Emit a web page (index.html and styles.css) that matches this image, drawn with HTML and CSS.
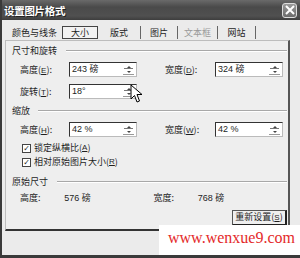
FILE: index.html
```html
<!DOCTYPE html>
<html lang="zh-CN">
<head>
    <meta charset="UTF-8">
    <title>设置图片格式</title>
    <link rel="stylesheet" href="styles.css">
</head>
<body>
    <div class="window">
        <div class="titlebar">
            <span class="title">设置图片格式</span>
            <span class="close">
                <svg width="12" height="12" viewBox="0 0 12 12"><path d="M2 2 L10 10 M10 2 L2 10" stroke="#fff" stroke-width="2"/></svg>
            </span>
        </div>
        <div class="content">
            <div class="tabs">
                <span class="tab tab-first">颜色与线条</span>
                <span class="tab active">大小</span>
                <span class="tab tab-mid">版式</span>
                <span class="tab tab-pic">图片</span>
                <span class="tab tab-text disabled">文本框</span>
                <span class="tab tab-web">网站</span>
            </div>
            <div class="panel">
                <div class="group-title"><span>尺寸和旋转</span></div>
                <div class="row">
                    <label class="lbl">高度(<u>E</u>):</label>
                    <div class="spin"><span class="val">243 磅</span><span class="arrows"><i class="up"></i><i class="down"></i></span></div>
                    <label class="lbl lbl-right">宽度(<u>D</u>):</label>
                    <div class="spin"><span class="val">324 磅</span><span class="arrows"><i class="up"></i><i class="down"></i></span></div>
                </div>
                <div class="row row-gap">
                    <label class="lbl">旋转(<u>T</u>):</label>
                    <div class="spin"><span class="val">18°</span><span class="arrows"><i class="up"></i><i class="down"></i></span></div>
                </div>

                <div class="group-title group-scale"><span>缩放</span></div>
                <div class="row">
                    <label class="lbl">高度(<u>H</u>):</label>
                    <div class="spin"><span class="val">42 %</span><span class="arrows"><i class="up"></i><i class="down"></i></span></div>
                    <label class="lbl lbl-right">宽度(<u>W</u>):</label>
                    <div class="spin"><span class="val">42 %</span><span class="arrows"><i class="up"></i><i class="down"></i></span></div>
                </div>
                <div class="check check-first"><span class="box">✓</span>锁定纵横比(<u>A</u>)</div>
                <div class="check"><span class="box">✓</span>相对原始图片大小(<u>R</u>)</div>

                <div class="group-title group-orig"><span>原始尺寸</span></div>
                <div class="row row-orig">
                    <span class="lbl lbl-short">高度:</span>
                    <span class="num">576 磅</span>
                    <span class="lbl lbl-short">宽度:</span>
                    <span class="num">768 磅</span>
                </div>
                <div class="actions">
                    <button class="reset">重新设置(<u>S</u>)</button>
                </div>
            </div>
        </div>

        <svg class="cursor" width="13" height="20" viewBox="0 0 13 20">
            <path d="M1 1 L1 15 L4.5 11.5 L7 18 L9.5 17 L7 10.5 L12 10.5 Z" fill="#fff" stroke="#000" stroke-width="1"/>
        </svg>

        <div class="watermark">www.wenxue9.com</div>
    </div>
</body>
</html>
```

FILE: styles.css
```css
body {
    margin: 0;
    padding: 0;
    background-color: #fff;
    font-family: "Noto Sans CJK SC", "Noto Sans", sans-serif;
    font-size: 9px;
    color: #1e1e1e;
}

.window {
    position: relative;
    width: 300px;
    height: 258px;
    box-sizing: border-box;
    background-color: #ebebeb;
    border-left: 2px solid #3a3a3a;
    border-bottom: 3px solid #3a3a3a;
    overflow: hidden;
}

.titlebar {
    height: 20px;
    margin-left: -2px;
    display: flex;
    align-items: center;
    justify-content: space-between;
    padding: 0 3px 0 4px;
    background: linear-gradient(#6a6a6a, #4a4a4a 35%, #505050 80%, #3e3e3e);
}

.title {
    color: #fff;
    font-weight: bold;
    font-size: 10.5px;
    letter-spacing: -0.3px;
    text-shadow: 1px 1px 0 #222;
}

.close {
    width: 15px;
    height: 15px;
    box-sizing: border-box;
    border: 1px solid #ddd;
    border-radius: 3px;
    background: linear-gradient(#9a9a9a, #6c6c6c);
    display: flex;
    align-items: center;
    justify-content: center;
}

.content {
    padding: 6px 0 0 3px;
}

.tabs {
    display: flex;
    height: 13px;
    align-items: stretch;
    line-height: 13px;
}

.tab {
    box-sizing: border-box;
    border-right: 1px solid #666;
    text-align: center;
    white-space: nowrap;
}

.tab-first {
    width: 57px;
    padding-left: 7px;
    text-align: left;
    border-right: none;
}

.tab.active {
    width: 36px;
    border: 1px solid #444;
    background-color: #f2f2f2;
    line-height: 11px;
}

.tab-mid { width: 43px; }
.tab-pic { width: 37px; }
.tab-text { width: 40px; }
.tab-web { width: 38px; }

.tab.disabled {
    color: #9a9a9a;
}

.panel {
    margin-top: 1px;
    width: 285px;
    height: 191px;
    box-sizing: border-box;
    border: 1px solid #bdbdbd;
    border-right: 2px solid #555;
    border-bottom: 2px solid #333;
    padding: 4px 1px 0 6px;
    background-color: #eeeeee;
}

.group-title {
    display: flex;
    align-items: center;
    height: 12px;
    line-height: 12px;
}

.group-title::after {
    content: "";
    flex: 1;
    margin-left: 9px;
    border-top: 1px solid #a8a8a8;
    border-bottom: 1px solid #fff;
}

.group-scale {
    margin-top: 6px;
}

.group-orig {
    margin-top: 8px;
}

.group-scale::after {
    margin-left: 8px;
}

.row {
    display: flex;
    align-items: center;
    padding-left: 8px;
    margin-top: 5px;
    height: 15px;
}

.row-gap {
    margin-top: 7px;
}

.lbl {
    width: 49px;
    white-space: nowrap;
}

.lbl-right {
    width: 50px;
    margin-left: 28px;
}

u {
    text-decoration: underline;
    font-family: "Liberation Sans", sans-serif;
    font-size: 8px;
}

.spin {
    width: 68px;
    height: 15px;
    box-sizing: border-box;
    border: 1px solid #333;
    border-right-color: #bbb;
    border-bottom-color: #bbb;
    background-color: #fff;
    display: flex;
    align-items: center;
    justify-content: space-between;
    padding-left: 2px;
}

.val {
    font-family: "Liberation Sans", "Noto Sans CJK SC", sans-serif;
    font-size: 9px;
    line-height: 13px;
}

.arrows {
    width: 11px;
    height: 11px;
    margin-right: 2px;
    display: flex;
    flex-direction: column;
    justify-content: space-around;
    align-items: center;
    border-bottom: 1px solid #999;
    box-sizing: border-box;
    position: relative;
}

.arrows::after {
    content: "";
    position: absolute;
    left: 1px;
    right: 1px;
    top: 4px;
    border-top: 1px solid #777;
}

.arrows i {
    width: 0;
    height: 0;
    border-left: 2px solid transparent;
    border-right: 2px solid transparent;
}

.arrows .up {
    border-bottom: 2px solid #444;
}

.arrows .down {
    border-top: 2px solid #444;
}

.check {
    display: flex;
    align-items: center;
    padding-left: 10px;
    height: 12px;
    line-height: 12px;
    margin-top: 2px;
}

.check-first {
    margin-top: 5px;
}

.box {
    width: 9px;
    height: 9px;
    box-sizing: border-box;
    border: 1px solid #444;
    background-color: #fff;
    font-size: 8px;
    line-height: 7px;
    text-align: center;
    font-weight: bold;
    margin-right: 3px;
    font-family: "DejaVu Sans", sans-serif;
}

.row-orig {
    margin-top: 3px;
    height: 12px;
}

.lbl-short {
    width: 48px;
}

.num {
    width: 97px;
    font-family: "Liberation Sans", "Noto Sans CJK SC", sans-serif;
    white-space: nowrap;
}

.actions {
    display: flex;
    justify-content: flex-end;
    margin-top: 7px;
}

.reset {
    width: 55px;
    height: 16px;
    padding: 0;
    border: 1px solid #555;
    border-right: 2px solid #222;
    border-bottom: 2px solid #222;
    background-color: #efefef;
    font-family: "Noto Sans CJK SC", sans-serif;
    font-size: 9px;
    color: #1e1e1e;
    line-height: 12px;
}

.cursor {
    position: absolute;
    left: 128px;
    top: 84px;
}

.watermark {
    position: absolute;
    left: 157px;
    top: 225px;
    right: 0;
    bottom: -3px;
    background-color: #fff;
    color: #e42a2a;
    font-family: "Liberation Serif", serif;
    font-size: 16px;
    padding: 4px 0 0 9px;
}
```
